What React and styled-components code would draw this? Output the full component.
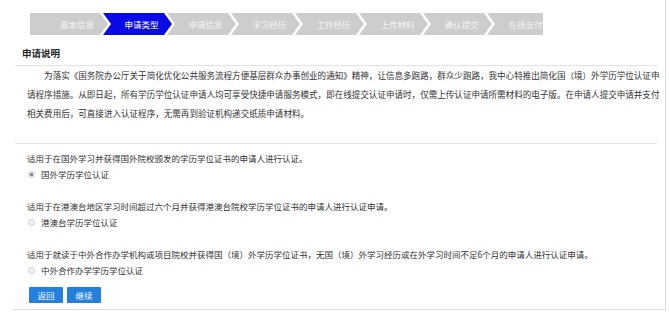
import React, { useState } from 'react'
import styled, { createGlobalStyle, css } from "styled-components"

const GlobalStyle = createGlobalStyle`
  html, body {
    margin: 0;
    padding: 0;
    background: #fff;
  }
  body {
    font-family: "Noto Sans CJK SC", "Liberation Sans", sans-serif;
    color: #333;
  }
`;

const Panel = styled.div`
  box-sizing: border-box;
  margin-left: 13px;
  width: 653px;
  height: 310px;
  padding-top: 13px;
  border-right: 1px solid #dcdcdc;
  border-bottom: 1px solid #dcdcdc;
`;

const StepBar = styled.div`
  display: flex;
  width: 513px;
  height: 22px;
  margin-left: 17px;
  overflow: hidden;
`;

const Step = styled.div`
  flex: none;
  box-sizing: border-box;
  width: ${({ $first }) => ($first ? 78 : 69)}px;
  margin-left: ${({ $first }) => ($first ? 0 : -5)}px;
  padding-left: ${({ $first }) => ($first ? 16 : 8)}px;
  display: flex;
  align-items: center;
  justify-content: center;
  font-size: 8.5px;
  background: ${({ $active }) => ($active ? "#0a0ae8" : "#cdcdcd")};
  color: ${({ $active }) => ($active ? "#fff" : "#f4f4f4")};
  ${({ $first }) =>
    $first
      ? css`clip-path: polygon(0 0, calc(100% - 8px) 0, 100% 50%, calc(100% - 8px) 100%, 0 100%);`
      : css`clip-path: polygon(0 0, calc(100% - 8px) 0, 100% 50%, calc(100% - 8px) 100%, 0 100%, 8px 50%);`}
`;

const Title = styled.h3`
  margin: 11px 0 0 9px;
  font-size: 9.5px;
  line-height: 14px;
  font-weight: 700;
  color: #222;
`;

const Divider = styled.div`
  margin: ${({ $top }) => $top}px 0 0 2px;
  width: 642px;
  border-top: 1px solid #e3e3e3;
`;

const Notice = styled.p`
  margin: 0 0 20px 14px;
  width: 634px;
  font-size: 8.55px;
  line-height: 19px;
  text-indent: 2em;
  color: #333;
`;

const Options = styled.div`
  display: flex;
  flex-direction: column;
  gap: 16px;
  padding: 6px 0 0 14px;
`;

const Option = styled.div`
  display: flex;
  flex-direction: column;
`;

const Hint = styled.div`
  font-size: 8.5px;
  line-height: 16px;
`;

const RadioRow = styled.label`
  display: flex;
  align-items: center;
  gap: 6px;
  font-size: 8.5px;
  line-height: 16px;
  cursor: pointer;
`;

const Dot = styled.span`
  box-sizing: border-box;
  width: 7px;
  height: 7px;
  margin-left: 1px;
  border-radius: 50%;
  border: 1px solid #d0d0d0;
  background: ${({ $on }) => ($on ? "radial-gradient(circle, #8a8a8a 0 1.5px, #e9e9e9 2px)" : "#f2f2f2")};
`;

const Buttons = styled.div`
  display: flex;
  gap: 4px;
  margin: 9px 0 0 16px;
`;

const Button = styled.button`
  width: 34px;
  height: 16px;
  padding: 0;
  border: none;
  border-radius: 1px;
  background: #2580dc;
  color: #fff;
  font-family: inherit;
  font-size: 8.5px;
  cursor: pointer;
`;

const steps = ["基本信息", "申请类型", "申请信息", "学习经历", "工作经历", "上传材料", "确认提交", "在线支付"];

const options = [
  { hint: "适用于在国外学习并获得国外院校颁发的学历学位证书的申请人进行认证。", label: "国外学历学位认证" },
  { hint: "适用于在港澳台地区学习时间超过六个月并获得港澳台院校学历学位证书的申请人进行认证申请。", label: "港澳台学历学位认证" },
  { hint: "适用于就读于中外合作办学机构或项目院校并获得国（境）外学历学位证书，无国（境）外学习经历或在外学习时间不足6个月的申请人进行认证申请。", label: "中外合作办学学历学位认证" },
];

const App = () => {
  const [picked, setPicked] = useState(0);

  return (
    <>
      <GlobalStyle />
      <Panel>
        <StepBar>
          {steps.map((s, i) => (
            <Step key={s} $first={i === 0} $active={i === 1}>{s}</Step>
          ))}
        </StepBar>
        <Title>申请说明</Title>
        <Divider $top={5} />
        <Notice>
          为落实《国务院办公厅关于简化优化公共服务流程方便基层群众办事创业的通知》精神，让信息多跑路，群众少跑路，我中心特推出简化国（境）外学历学位认证申请程序措施。从即日起，所有学历学位认证申请人均可享受快捷申请服务模式，即在线提交认证申请时，仅需上传认证申请所需材料的电子版。在申请人提交申请并支付相关费用后，可直接进入认证程序，无需再到验证机构递交纸质申请材料。
        </Notice>
        <Divider $top={0} />
        <Options>
          {options.map((o, i) => (
            <Option key={o.label}>
              <Hint>{o.hint}</Hint>
              <RadioRow onClick={() => setPicked(i)}>
                <Dot $on={picked === i} />
                {o.label}
              </RadioRow>
            </Option>
          ))}
        </Options>
        <Buttons>
          <Button>返回</Button>
          <Button>继续</Button>
        </Buttons>
      </Panel>
    </>
  )
}

export default App
